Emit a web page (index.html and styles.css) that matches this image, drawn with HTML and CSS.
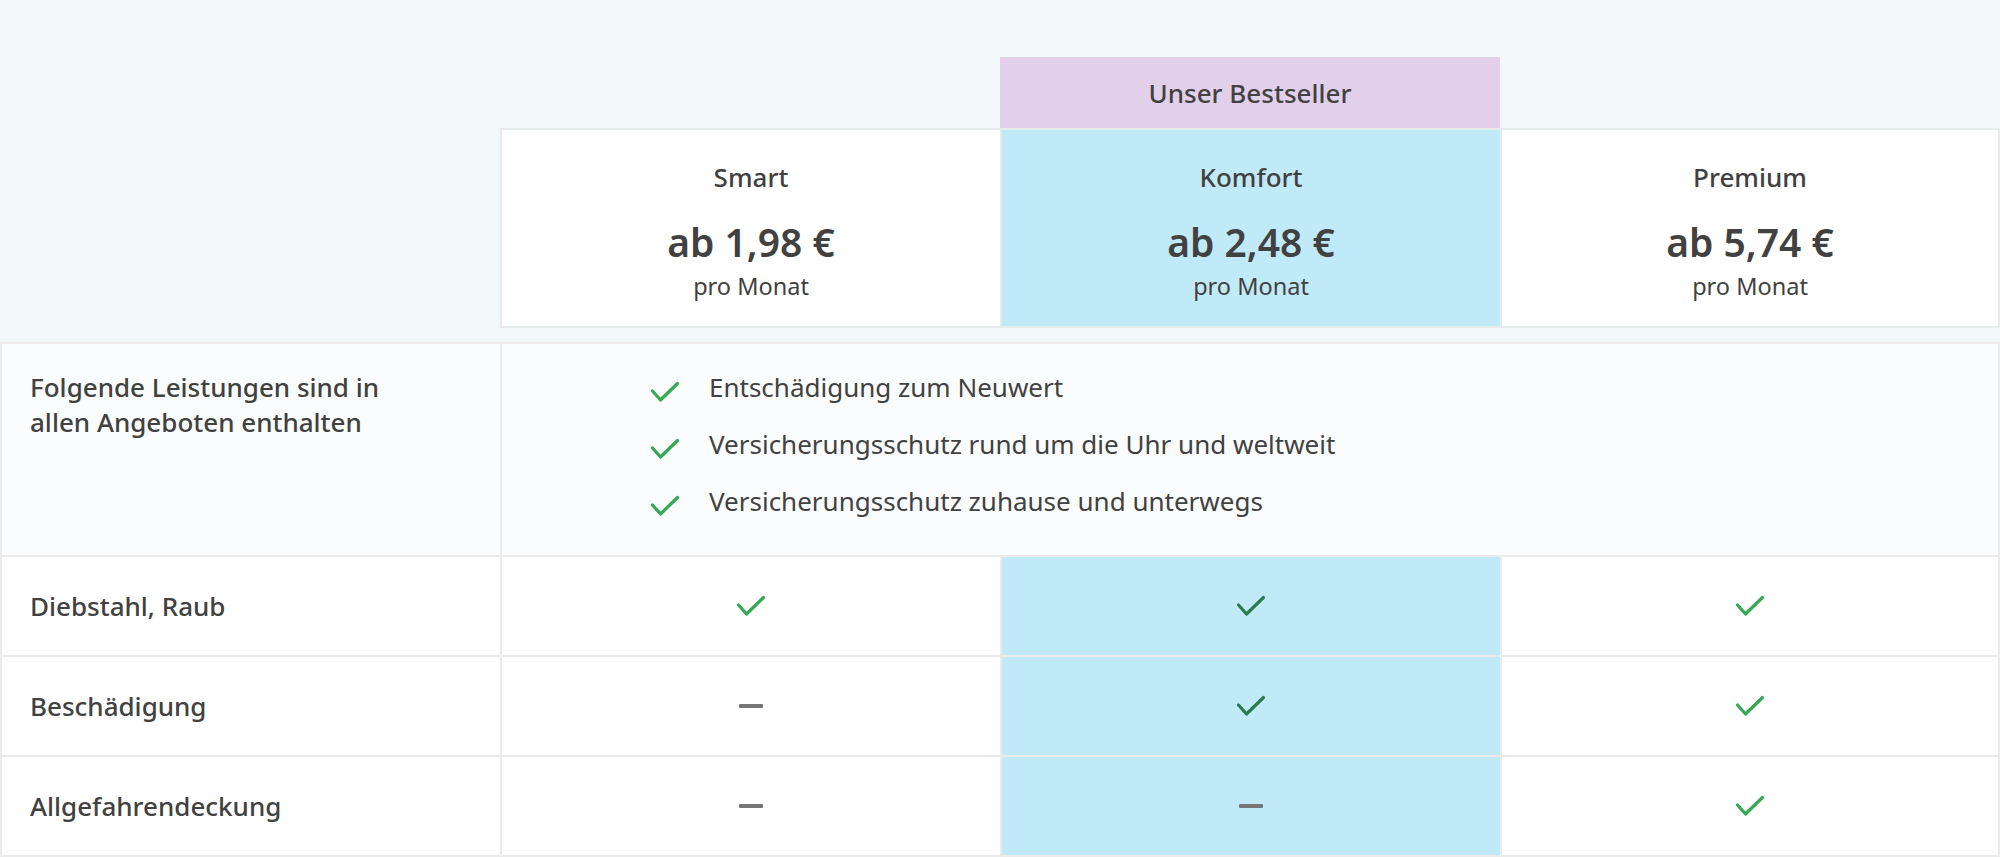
FILE: index.html
```html
<!DOCTYPE html>
<html lang="de">
<head>
<meta charset="utf-8">
<title>Tarifvergleich</title>
<link rel="stylesheet" href="styles.css">
</head>
<body>
<div class="page">
  <header class="plans">
    <div class="badge">Unser Bestseller</div>
    <div class="card card--smart">
      <div class="card__name">Smart</div>
      <div class="card__price">ab 1,98 €</div>
      <div class="card__period">pro Monat</div>
    </div>
    <div class="card card--komfort">
      <div class="card__name">Komfort</div>
      <div class="card__price">ab 2,48 €</div>
      <div class="card__period">pro Monat</div>
    </div>
    <div class="card card--premium">
      <div class="card__name">Premium</div>
      <div class="card__price">ab 5,74 €</div>
      <div class="card__period">pro Monat</div>
    </div>
  </header>

  <section class="table">
    <div class="row row--intro">
      <div class="cell cell--label cell--top">Folgende Leistungen sind in<br>allen Angeboten enthalten</div>
      <div class="cell cell--wide">
        <ul class="features">
          <li class="features__item">
            <svg class="check" viewBox="0 0 30 22" width="30" height="22"><polyline points="2.5,10 10.5,19 27.5,2.5"/></svg>
            <span>Entschädigung zum Neuwert</span>
          </li>
          <li class="features__item">
            <svg class="check" viewBox="0 0 30 22" width="30" height="22"><polyline points="2.5,10 10.5,19 27.5,2.5"/></svg>
            <span>Versicherungsschutz rund um die Uhr und weltweit</span>
          </li>
          <li class="features__item">
            <svg class="check" viewBox="0 0 30 22" width="30" height="22"><polyline points="2.5,10 10.5,19 27.5,2.5"/></svg>
            <span>Versicherungsschutz zuhause und unterwegs</span>
          </li>
        </ul>
      </div>
    </div>

    <div class="row">
      <div class="cell cell--label">Diebstahl, Raub</div>
      <div class="cell cell--mark"><svg class="check" viewBox="0 0 30 22" width="30" height="22"><polyline points="2.5,10 10.5,19 27.5,2.5"/></svg></div>
      <div class="cell cell--mark cell--komfort"><svg class="check check--dark" viewBox="0 0 30 22" width="30" height="22"><polyline points="2.5,10 10.5,19 27.5,2.5"/></svg></div>
      <div class="cell cell--mark"><svg class="check" viewBox="0 0 30 22" width="30" height="22"><polyline points="2.5,10 10.5,19 27.5,2.5"/></svg></div>
    </div>

    <div class="row">
      <div class="cell cell--label">Beschädigung</div>
      <div class="cell cell--mark"><span class="dash"></span></div>
      <div class="cell cell--mark cell--komfort"><svg class="check check--dark" viewBox="0 0 30 22" width="30" height="22"><polyline points="2.5,10 10.5,19 27.5,2.5"/></svg></div>
      <div class="cell cell--mark"><svg class="check" viewBox="0 0 30 22" width="30" height="22"><polyline points="2.5,10 10.5,19 27.5,2.5"/></svg></div>
    </div>

    <div class="row">
      <div class="cell cell--label">Allgefahrendeckung</div>
      <div class="cell cell--mark"><span class="dash"></span></div>
      <div class="cell cell--mark cell--komfort"><span class="dash"></span></div>
      <div class="cell cell--mark"><svg class="check" viewBox="0 0 30 22" width="30" height="22"><polyline points="2.5,10 10.5,19 27.5,2.5"/></svg></div>
    </div>
  </section>
</div>
</body>
</html>
```

FILE: styles.css
```css
* {
  box-sizing: border-box;
}

html, body {
  margin: 0;
  padding: 0;
  background: #ffffff;
}

body {
  font-family: "Noto Sans", "Open Sans", sans-serif;
  color: #414141;
  width: 2000px;
}

.page {
  width: 2000px;
}

/* ---------- header with plan cards ---------- */
.plans {
  display: grid;
  grid-template-columns: repeat(4, 500px);
  grid-template-rows: 71px 200px;
  padding: 57px 0 14px;
  background: #f0f8fa;
}

.badge {
  grid-column: 3;
  grid-row: 1;
  display: flex;
  align-items: center;
  justify-content: center;
  background: #e2d0eb;
  font-size: 26px;
  font-weight: 500;
}

.card {
  grid-row: 2;
  background: #ffffff;
  border: 2px solid #e8ebec;
  border-right: 0;
  padding-top: 30px;
  text-align: center;
}

.card--smart { grid-column: 2; }
.card--komfort { grid-column: 3; background: #c1eaf9; }
.card--premium { grid-column: 4; border-right: 2px solid #e8ebec; }

.card__name {
  font-size: 26px;
  line-height: 35px;
  font-weight: 500;
}

.card__price {
  margin-top: 22px;
  font-size: 39px;
  line-height: 50px;
  font-weight: 600;
}

.card__period {
  margin-top: 3px;
  font-size: 23.5px;
  line-height: 32px;
}

/* ---------- comparison table ---------- */
.table {
  width: 2000px;
}

.row {
  display: grid;
  grid-template-columns: repeat(4, 500px);
  height: 100px;
  border-bottom: 2px solid #ebebeb;
  background: #ffffff;
}

.row--intro {
  height: 215px;
  border-top: 2px solid #ebebeb;
  background: #fafcfd;
}

.cell {
  border-left: 2px solid #ebebeb;
}

.cell:last-child {
  border-right: 2px solid #ebebeb;
}

.cell--label {
  display: flex;
  align-items: center;
  padding-left: 28px;
  font-size: 26px;
  line-height: 35px;
  font-weight: 500;
}

.cell--top {
  align-items: flex-start;
  padding-top: 26px;
}

.cell--wide {
  grid-column: 2 / span 3;
  padding: 26px 0 0 148px;
}

.cell--mark {
  display: flex;
  align-items: center;
  justify-content: center;
}

.cell--komfort {
  background: #c1eaf9;
}

.features {
  list-style: none;
  margin: 0;
  padding: 0;
}

.features__item {
  display: flex;
  align-items: flex-start;
  gap: 29px;
  font-size: 26px;
  line-height: 35px;
}

.features__item + .features__item {
  margin-top: 22px;
}

.features__item .check {
  margin-top: 11px;
  flex: none;
}

.check {
  display: block;
}

.check polyline {
  fill: none;
  stroke: #34a853;
  stroke-width: 3.2;
  stroke-linecap: round;
  stroke-linejoin: round;
}

.check--dark polyline {
  stroke: #2b7c4c;
}

.dash {
  display: block;
  width: 24px;
  height: 4px;
  border-radius: 1px;
  background: #767676;
}
```
